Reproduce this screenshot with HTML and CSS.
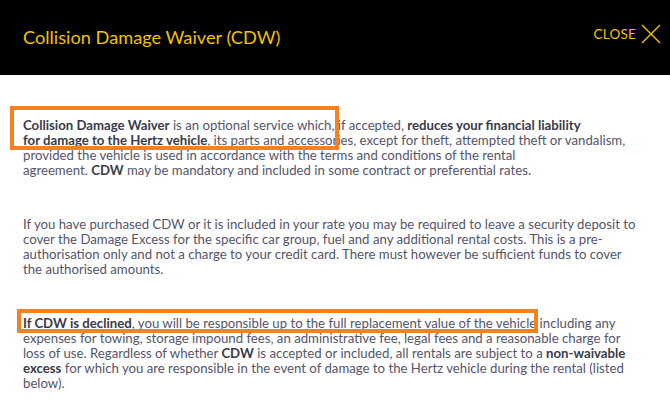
FILE: index.html
```html
<!DOCTYPE html>
<html lang="en">
<head>
<meta charset="utf-8">
<title>Collision Damage Waiver (CDW)</title>
<link rel="stylesheet" href="styles.css">
</head>
<body>
<div class="modal">
  <header class="modal-head">
    <h1 class="modal-title">Collision Damage Waiver (CDW)</h1>
    <button class="close-btn" type="button">
      <span class="close-label">CLOSE</span>
      <svg class="close-icon" width="20" height="20" viewBox="0 0 20 20" aria-hidden="true">
        <path d="M1 1 L19 19 M19 1 L1 19" stroke="#f2c200" stroke-width="1.4" fill="none"/>
      </svg>
    </button>
  </header>
  <div class="modal-body">
    <p class="para"><b>Collision Damage Waiver</b> is an optional service which, if accepted, <b>reduces your financial liability</b><br><b>for damage to the Hertz vehicle</b>, its parts and accessories, except for theft, attempted theft or vandalism,<br>provided the vehicle is used in accordance with the terms and conditions of the rental<br>agreement. <b>CDW</b> may be mandatory and included in some contract or preferential rates.</p>
    <p class="para">If you have purchased CDW or it is included in your rate you may be required to leave a security deposit to cover the Damage Excess for the specific car group, fuel and any additional rental costs. This is a pre-authorisation only and not a charge to your credit card. There must however be sufficient funds to cover the authorised amounts.</p>
    <p class="para"><b>If CDW is declined</b>, you will be responsible up to the full replacement value of the vehicle including any expenses for towing, storage impound fees, an administrative fee, legal fees and a reasonable charge for loss of use. Regardless of whether <b>CDW</b> is accepted or included, all rentals are subject to a <b>non-waivable excess</b> for which you are responsible in the event of damage to the Hertz vehicle during the rental (listed below).</p>
    <span class="mark mark-one"></span>
    <span class="mark mark-two"></span>
  </div>
</div>
</body>
</html>
```
FILE: styles.css
```css
html, body {
  margin: 0;
  padding: 0;
  background: #ffffff;
}

.modal {
  width: 670px;
  height: 400px;
  overflow: hidden;
  font-family: Lato, "Noto Sans", sans-serif;
}

.modal-head {
  height: 75px;
  background: #000000;
  display: flex;
  align-items: center;
  justify-content: space-between;
  padding: 0 9px 0 23px;
  box-sizing: border-box;
}

.modal-title {
  margin: 0;
  color: #f2c200;
  font-size: 18.2px;
  font-weight: 400;
  line-height: 1;
}

.close-btn {
  display: flex;
  align-items: center;
  gap: 5px;
  background: none;
  border: 0;
  padding: 0;
  margin-top: -8px;
  cursor: pointer;
}

.close-label {
  color: #f2c200;
  font-family: Lato, "Noto Sans", sans-serif;
  font-size: 13.5px;
  letter-spacing: 0.2px;
}

.close-icon {
  display: block;
}

.modal-body {
  position: relative;
  padding: 43px 30px 0 23px;
  color: #55556a;
  font-size: 13.2px;
  line-height: 15px;
}

.para {
  margin: 0 0 39px;
}

.para b {
  font-weight: 700;
  color: #3a3a48;
}

/* highlight frames drawn over the copy */
.mark {
  position: absolute;
  border: 4px solid #f5821f;
  box-sizing: border-box;
  pointer-events: none;
}

.mark-one {
  left: 10px;
  top: 31px;
  width: 329px;
  height: 44px;
}

.mark-two {
  left: 17px;
  top: 234px;
  width: 521px;
  height: 24px;
}
```
